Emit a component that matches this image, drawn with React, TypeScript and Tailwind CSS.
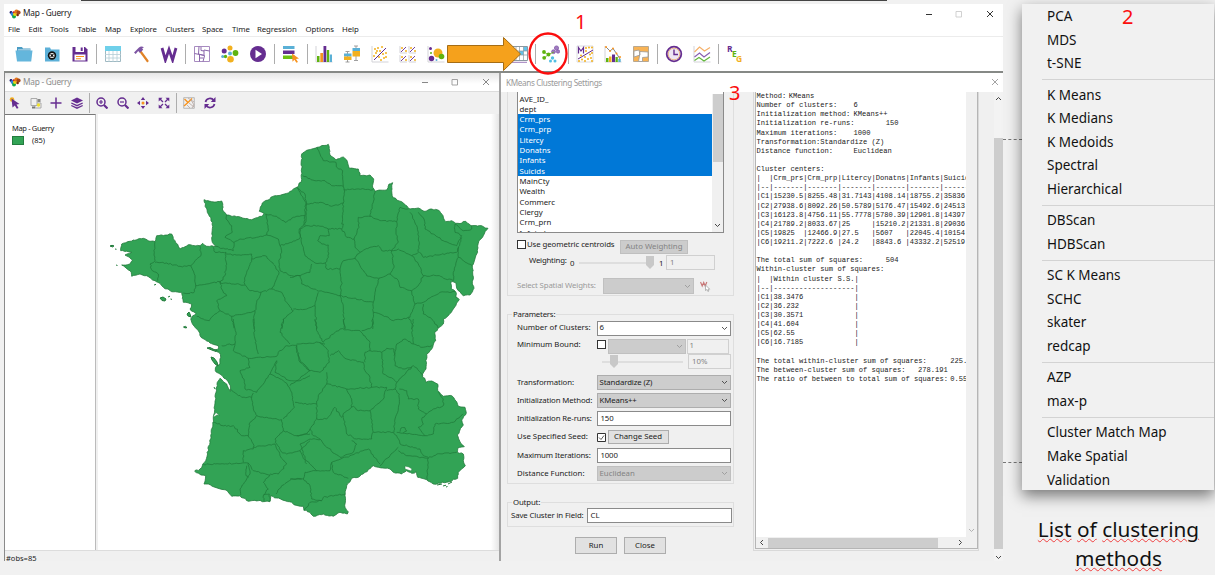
import React from "react";

/* ---------- map geometry ---------- */

type Pt = [number, number];

const parse = (s: string): Pt[] =>
  s.trim().split(/\s+/).map((p) => p.split(",").map(Number) as unknown as Pt);

let seed = 7;
const rnd = () => {
  seed = (seed * 16807) % 2147483647;
  return seed / 2147483647 - 0.5;
};

/** Turns a coarse polyline into a wobbly border. */
const rough = (pts: Pt[], step: number, amp: number): string => {
  let d = `M${pts[0][0].toFixed(1)} ${pts[0][1].toFixed(1)}`;
  for (let i = 1; i < pts.length; i++) {
    const [ax, ay] = pts[i - 1];
    const [bx, by] = pts[i];
    const n = Math.max(1, Math.round(Math.hypot(bx - ax, by - ay) / step));
    for (let k = 1; k <= n; k++) {
      const j = k === n ? 0 : amp;
      const x = ax + ((bx - ax) * k) / n + rnd() * j;
      const y = ay + ((by - ay) * k) / n + rnd() * j;
      d += `L${x.toFixed(1)} ${y.toFixed(1)}`;
    }
  }
  return d;
};

const OUTLINE = `302.7,154 306.7,151.3 317.3,148.3 328.3,145.3 330,156 336,161 343.3,158 346.7,161 349.3,169.3 358.3,170 360,176.7 370,176 373.7,180 372.7,188.3 375,192.3 386.7,191 389,185 392.7,183.7 391.7,191.7 393.3,198.7 401.7,202.7 410,210 418.3,209 424,212.3 431.7,210 439.3,211.7 446,222.7 451.7,221.7 455.7,224.3 461.7,224 465.7,222.3 471,226.7 481.7,226.7 488,229.3 483.3,236.7 478.3,244.3 476.7,255 472.3,266.7 473.3,280 472.3,285 474,289.3 470,296 463.3,296.7 460,292.7 456.7,289.3 456,284 451.3,282.3 451.3,290 455.7,292.7 456,298.3 459.3,300.7 453.3,310 448.3,316.7 443.3,320 443.3,325 435,332.7 435.7,341.7 431.7,350 426.7,355 426,370 422.3,376 426,383.3 431.7,382 437.7,385 437.7,391.7 443.3,397.3 451.7,396.7 456.7,402.7 458.3,407.3 465,408.3 466.3,414 461.7,421 463.3,426 457.3,436 460,442.7 464.3,447.7 457.7,449.3 457.3,453.3 463.3,455 463.3,461.7 465.3,466.7 458.3,473.3 457.7,479.3 446.7,483.3 433.3,485 426.7,480.7 417.7,478.3 416,472.7 411.7,474.3 406.7,471.7 401.7,475 393.3,473.3 390,470 378.3,468.3 373.3,466.7 365,473.3 358.3,478.3 351.7,479.3 346.7,486.7 345,496.7 345,508.3 348.3,512.7 347.3,515 340,513.3 333.3,517.3 323.3,515 313.3,517.3 310,513.3 304,511.3 303.3,507.3 294.3,506 291.7,503.3 285,501.7 276.7,499 270.7,496.7 270,502.7 258.3,501.7 248.3,502.3 240,496.7 231.7,497.3 226,491 215,488.3 208.3,485 204,485 205.7,476.7 201,476 194.7,472.3 200,470 205.7,461.7 210,443.3 213.3,420 216,393.3 217.3,383.3 220,379.3 226.7,385 230.3,392.3 230.3,386.7 226,380 220,375 215.3,371.7 216.7,366.7 220,365 220.7,358.3 219,353.3 215,351 218.3,350 218.3,346.7 210,344 201,338.3 198.3,331.7 191.7,323.3 190.7,320 196,314.3 190,310 191.7,305 183.3,303.3 181.7,293.3 171.7,292.7 163.3,288.3 160,284.3 155,281.7 146.7,276.7 140,275 131.7,277.3 130,271.7 121.7,266 130,265 132.7,261 125,256 131.7,253.3 120.7,251.7 121.7,245 133.3,241 143.3,239.3 150,242.3 155,242.7 156.7,236.7 171.7,235 175,241.7 180,250 188.3,245.7 200,246.7 202.7,244.3 206.7,247.3 216,247.3 212.3,243.3 212.3,223.3 207.3,213.3 204,200.7 211.7,202.7 221.7,202 222.7,206.7 222.3,210 226.7,216 236.7,217.7 251.7,220.7 261.7,217.3 264,214.3 259.3,212.3 262.3,204 275,196.7 288.3,194 297.3,188.3 301.7,180.7 301.7,155 302.7,154`;

const BORDERS: { ox: number; oy: number; lines: string[] }[] = [
  {
    ox: 100,
    oy: 130,
    lines: [
      "165,338 163,370 165,395 150,405 157,425 175,435 173,455",
      "165,400 200,402 240,412 272,410 290,390 303,380 300,350",
      "272,410 285,440 287,470 280,492 250,492",
      "287,470 320,465 360,458",
      "340,355 345,370 378,370 378,410 375,440 360,462 400,465 435,468",
      "348,352 375,360 400,365 402,340 375,325 397,310 395,290 378,270 380,258",
      "378,375 410,378 455,375 455,390 440,430 432,460 450,485 483,490",
      "402,340 420,330 470,325 500,318 505,300 497,255",
      "455,390 495,380 520,405 537,430 525,460 515,480 483,490",
      "500,318 535,330 540,350 545,370 537,400 540,425 575,440 600,440",
      "497,255 530,262 555,280 580,265 615,260",
      "540,350 575,340 600,328 598,300 610,290 615,260 617,220 592,175",
      "360,458 365,480 380,500 350,515 360,545 340,560 328,575 310,570 290,562",
      "360,545 395,562 440,552 465,545 470,520 483,490",
      "395,562 402,598",
      "465,545 462,570 462,600",
      "515,480 545,490 555,515 580,545 550,570 545,600",
    ],
  },
  {
    ox: 290,
    oy: 130,
    lines: [
      "38,140 75,155 105,155 125,170 160,172",
      "82,55 90,75 100,95 138,100 140,115 158,125 160,172 162,182",
      "162,182 200,180 250,182",
      "20,175 45,195 48,215 50,225",
      "50,225 90,220 125,232 160,222 162,182",
      "50,225 48,260 45,290",
      "48,290 85,290 115,300 155,300 160,285 155,285 160,222",
      "48,290 30,300 35,345 45,380 65,395 75,402 105,402 110,420",
      "155,300 170,325 192,330 207,295 205,265 240,262",
      "255,187 250,220 240,262 275,275 320,278 330,235 355,240",
      "320,278 318,310 325,340 305,365",
      "192,330 195,355 210,370 195,385",
      "210,370 240,355 265,350 275,365 305,365",
      "115,300 118,320 90,320 83,335 95,345 115,348 115,385 105,402",
      "65,405 60,430 30,440 0,445",
      "30,440 35,465 70,480 110,490 150,500",
      "110,420 150,420 160,395 195,388",
      "195,385 210,410 230,440 265,448 300,435 312,415 305,365",
      "150,420 155,460 150,500 190,508 235,518 250,520 255,490 268,448",
      "300,435 325,455 330,475 365,485 385,470 400,440 385,405 365,380 385,370 388,340 380,290 360,250",
      "305,365 325,360 365,380",
      "385,250 402,270 405,300 430,315 460,335 500,350 515,320 495,310 495,285",
      "388,370 400,385 440,378 500,370 505,355",
      "515,325 505,360 505,385 547,410",
      "505,385 490,430 490,455",
      "400,440 440,440 490,455",
      "365,485 375,525 400,520 450,490 495,488",
      "375,525 360,565 310,575 270,555 250,550 250,520",
      "400,525 400,555 430,575 445,598",
      "250,550 248,600",
      "150,500 160,530 163,600",
      "85,490 75,530 50,540 10,540",
      "75,530 80,600",
      "355,565 370,590 365,600",
      "495,285 520,305 545,300 543,290",
    ],
  },
  {
    ox: 100,
    oy: 320,
    lines: [
      "400,0 408,40 405,75 365,80",
      "405,75 400,95 445,118 450,145 420,155 432,180 435,210 470,220 490,195 510,165 530,125",
      "460,0 465,60 475,105",
      "445,118 475,115 530,112 535,100 560,80 590,78",
      "550,0 540,40 570,75",
      "590,78 600,130 630,155",
      "530,125 525,160 570,185 600,185 630,170",
      "510,165 550,185 568,205 578,235 583,265 550,300",
      "391,210 425,235 455,235 460,270 470,290",
      "455,235 460,222",
      "470,290 500,295 545,302 550,335 525,360 530,375",
      "340,310 380,322 400,320 425,350 445,350 450,310 470,290",
      "445,350 460,375 460,390 430,395 430,430",
      "460,385 525,375 540,410 560,435 535,465 510,465",
      "310,437 360,435 445,432 460,455 510,468",
      "445,432 450,465 440,480 420,510 422,528",
      "440,440 438,470 447,475",
      "510,468 490,490 505,510 490,530 492,546",
      "550,335 590,350 630,345",
      "530,375 545,400 560,405 600,395 630,365",
      "528,525 545,500 575,480 605,480",
      "490,528 508,525 510,546",
    ],
  },
  {
    ox: 290,
    oy: 320,
    lines: [
      "20,80 20,100 35,130 60,155 90,160 118,130 115,95 90,70",
      "20,75 85,70 105,75",
      "75,0 80,35 100,70",
      "100,70 130,45 150,30 185,35 210,35 240,70 240,95 225,100 225,130",
      "160,0 165,30",
      "248,0 245,25 215,35",
      "120,110 145,95 170,120 220,130 225,155 240,175 245,205 170,210",
      "240,95 275,100 290,88 312,90 315,140 345,150 365,145",
      "275,100 280,165 310,180 320,190",
      "312,110 320,75 345,60 370,75 400,85 425,80",
      "370,0 365,40 370,75",
      "400,170 370,140 320,190 315,210",
      "60,155 20,185 0,200",
      "110,160 110,195 85,230 80,255 40,255 15,250",
      "110,195 170,210 185,240 185,265",
      "245,205 290,205 280,240 240,275",
      "240,275 205,275 190,262 165,280 155,295 135,265 110,300 80,300 80,255",
      "160,290 170,345 200,360 245,360 248,340",
      "240,275 245,310 250,340 310,340 320,350",
      "290,215 315,210 328,225 325,270 315,300 312,340",
      "328,210 350,215 355,240 385,240 385,270 410,285",
      "410,285 430,270 460,260 460,240 445,220",
      "410,285 395,300 400,315 385,325 405,350 320,340",
      "80,300 60,330 70,350 90,360 110,385 150,415 190,400 200,375 185,365",
      "405,350 430,345 435,315 490,310 520,285",
      "320,350 330,375 390,390 400,410 415,415",
      "325,385 300,410 270,440",
      "325,395 350,410 415,418",
      "500,400 440,405 415,418 412,460 412,482",
      "125,430 180,410 235,390 270,435",
      "125,430 130,460 175,478",
      "20,350 50,345 60,330",
      "30,375 45,420 80,455 120,455 125,430",
      "30,375 60,360 90,362",
      "30,395 50,435",
      "80,455 45,460 40,480 0,480",
      "40,480 60,500 65,540 95,545 100,535 165,525",
      "42,574 60,550 95,545",
      "330,338 333,327 345,326 350,336 340,342",
    ],
  },
];

const ISLANDS = [
  "M110 247l2-.7 2 .6-1.500 1zM115 250l1.500.3M116 266l1.500.5M154 286l2-.6M160 299l3-1 3 2-1 2-3-.5zM168 298l2-.8M170.500 300l1.500.4M187 315l2-2 1 2 1 3-3-1zM183.500 328l2-.6 1.500 1.200-2 .3zM207 349l3-.5 4 2 3 .8-1 1.200-4-1.400zM211 358l3 1 3 4 1 4-3-2-3-4zM214 388l1 2",
  "M437 486l5-1M443 487l3-.8M448 485l4-2M446 488l1.500-.5",
];

const OUTLINE_D = rough(parse(OUTLINE), 2.2, 1.3) + "Z";
const BORDER_D = BORDERS.map(({ ox, oy, lines }) =>
  lines
    .map((l) => rough(parse(l).map(([x, y]) => [ox + x / 3, oy + y / 3] as Pt), 2, 1.4))
    .join("")
).join("");

const FranceMap = () => (
  <svg viewBox="98 115 402 435" className="block h-[435px] w-[402px]">
    <path d={OUTLINE_D} fill="#32a355" stroke="#227a3b" strokeWidth=".8" />
    <path d={BORDER_D} fill="none" stroke="#1f7a3a" strokeWidth=".75" />
    <path d={ISLANDS.join("")} fill="#32a355" stroke="#227a3b" strokeWidth="1" />
    <path d="M213.500 417l2.500-3.500 3.500 3-2.500-.5-3 2zM405 467l4 1 3 2-1 2-3-1-3-1z" fill="#fff" stroke="#227a3b" strokeWidth=".5" />
  </svg>
);

/* ---------- icons ---------- */

const P = "#652d90";
const O = "#f7931e";
const Y = "#f2b01e";
const G = "#5fb30f";
const B = "#5ab0d6";

const Logo = () => (
  <svg viewBox="0 0 12 10" className="block h-[10px] w-[12px] shrink-0">
    <circle cx="2" cy="3.400" r="1.400" fill="#1b1b6e" />
    <circle cx="3.600" cy="5" r="2" fill="#2f7fe0" />
    <circle cx="5" cy="7.600" r="2" fill="#12a84c" />
    <circle cx="6" cy="5" r="2" fill="#e8d515" />
    <circle cx="7.500" cy="2.600" r="2.200" fill="#e2761b" />
    <circle cx="9.600" cy="3.500" r="2" fill="#a3471a" />
    <circle cx="8.600" cy="6" r="1.300" fill="#7b2a12" />
    <circle cx="4.700" cy="3.200" r="1" fill="#d3231d" />
  </svg>
);

const Ic = ({ children }: { children?: React.ReactNode }) => (
  <span className="flex w-[28px] shrink-0 justify-center">
    <svg viewBox="0 0 18 18" className="block h-[18px] w-[18px]" fill="none">
      {children}
    </svg>
  </span>
);

const Dots = ({ d, c }: { d: string; c: string }) => (
  <g fill={c}>
    {parse(d).map(([x, y], i) => (
      <circle key={i} cx={x} cy={y} r="1" />
    ))}
  </g>
);

const Axis = () => <path d="M1 1v16h16.500" stroke="#d3d3d8" />;

const Sep = ({ className }: { className: string }) => (
  <span className={`flex shrink-0 justify-center ${className}`}>
    <span className="h-[20px] w-px bg-[#adadad]" />
  </span>
);

const MainToolbar = () => (
  <div className="flex h-[34px] items-center pl-[6px]">
    <Ic>
      <path d="M2 2h5l1 1.500h7.500V7H2z" fill="#4a9cc4" />
      <path d="M.5 5.500h17L16.200 16.500H2z" fill="#64b6dc" />
      <path d="M3 4.800h12.500" stroke="#d7eef8" strokeWidth=".8" />
    </Ic>
    <Ic>
      <path d="M2 2.500h5l1 2h8.500v12H2z" fill="#5cb0d8" />
      <circle cx="9" cy="10.500" r="4.200" fill="#111" />
      <circle cx="9" cy="10.500" r="2.500" fill="#fff" />
      <path d="M7.600 9.100l2.800 2.800M10.400 9.100l-2.800 2.800" stroke="#111" strokeWidth="1.200" />
    </Ic>
    <Ic>
      <path d="M1.500 2h12.500l2.500 2.500v12h-15z" fill={P} />
      <path d="M4.500 2h8.500v5h-8.500z" fill="#fff" />
      <path d="M9.700 2.500h2v3.500h-2z" fill={P} />
      <path d="M3.500 9.500h11v6h-11z" fill="#fff" />
      <path d="M5 11.500h8M5 13.700h5" stroke={O} strokeWidth="1.100" />
    </Ic>
    <Sep className="w-[5px]" />
    <Ic>
      <path d="M1.500 1.500h15v15h-15z" fill="#fff" stroke="#9fb9c2" />
      <path d="M1 1h16v5H1z" fill="#6fd0ea" />
      <path d="M1 9.500h16M1 13h16M5 6v11M9 6v11M13 6v11" stroke="#b5cdd5" strokeWidth=".8" />
    </Ic>
    <Ic>
      <path d="M8.500 6.500l7 9.500" stroke="#e08327" strokeWidth="2.200" strokeLinecap="round" />
      <path d="M2 7.500L7 2.500c1.500-1.300 3.500-1 5-.2l-1.800.9 1 1.500-3.400 3-1.600-1.700-2.500 3z" fill="#7d55a3" />
    </Ic>
    <Ic>
      <path d="M2 3l3.400 12L9 4.500 12.600 15 16 3" stroke={P} strokeWidth="2.800" />
    </Ic>
    <Sep className="w-[5px]" />
    <Ic>
      <path d="M1.500 1.500h15v15h-15z" stroke="#a78bc0" />
      <path d="M6 1.500l-.5 7.500 6 1.500M1.500 8.500l10 2M11 10.500V5l5.500 1M8 2v3.500l3 .5M6.500 9v7.500M11.500 11l-1.500 5.500M6.500 13h4" stroke="#8a66ab" />
    </Ic>
    <Ic>
      <circle cx="9" cy="3" r="2.500" fill={Y} />
      <circle cx="3.200" cy="6" r="2.500" fill={P} />
      <circle cx="9" cy="8.500" r="2" fill={B} />
      <circle cx="14.500" cy="8" r="2.900" fill={G} />
      <circle cx="1.700" cy="11.500" r="1.500" fill={B} />
      <circle cx="4.500" cy="11.500" r="1.700" fill={G} />
      <circle cx="9.500" cy="14.300" r="3.300" fill={Y} />
    </Ic>
    <Ic>
      <circle cx="9" cy="9" r="8" fill={P} />
      <path d="M6.500 4.800l6.500 4.200-6.500 4.200z" fill="#fff" />
    </Ic>
    <Sep className="w-[4px]" />
    <Ic>
      <path d="M2 1h11.500v3H2z" fill={B} />
      <path d="M2 5.500h11.500v3.500H2z" fill={P} />
      <path d="M2 10.500h11.500v3.500H2z" fill="#6fc011" />
      <path d="M11 8.500l7 5-3 .4 2 3-1.600.8-2-3-1.900 2z" fill={O} />
    </Ic>
    <Sep className="w-[6px]" />
    <Ic>
      <Axis />
      <path d="M2 11h2.500v6H2z" fill={G} />
      <path d="M5.300 8h2.700v9H5.300z" fill={O} />
      <path d="M8.500 1h2.800v16H8.500z" fill={P} />
      <path d="M11.800 5h2.400v12h-2.400z" fill={G} />
      <path d="M14.700 9.500h2.300v7.500h-2.300z" fill={B} />
    </Ic>
    <Ic>
      <path d="M4.500 7v10M2.500 6.500h4M2.500 17h4M13 1v14M11 1h4M11 15.500h4" stroke="#888" strokeWidth=".8" />
      <path d="M1 8.500h7.500v3H1zM9.500 3h7.500v3H9.500z" fill={B} />
      <path d="M1 11.500h7.500v3.500H1zM9.500 6h7.500v5.500H9.500z" fill={Y} />
    </Ic>
    <Ic>
      <Axis />
      <path d="M3 15L15 3" stroke={P} />
      <Dots c={Y} d="4,4 7,3 9,6 5,8 3,11 8,12 12,9 15,8 13,13 10,15 15,12 11,2 6,6" />
    </Ic>
    <Ic>
      <path d="M1 1v7h7M10 1v7h7M1 10v7h7M10 10v7h7" stroke="#d3d3d8" />
      <path d="M2 7l5-5M11 7l5-5M2 16l5-5M11 16l5-5" stroke={P} strokeWidth=".9" />
      <Dots c={Y} d="3,3 7,6 12,3 16,6 3,12 7,15 12,12 16,15" />
    </Ic>
    <Ic>
      <Axis />
      <circle cx="3.500" cy="3.500" r="1.500" fill={P} />
      <circle cx="4" cy="8" r="1" fill={G} />
      <circle cx="4.500" cy="13.500" r="2.700" fill={P} />
      <circle cx="11" cy="8" r="4.500" fill={Y} />
      <circle cx="14.500" cy="11.500" r="2.800" fill={G} />
      <circle cx="9.500" cy="15" r="1" fill={B} />
    </Ic>
    <Ic>
      <path d="M1 17h16.500" stroke="#d3d3d8" />
    </Ic>
    <Ic>
      <path d="M1 17l4-.6 4 .6 4-.8" stroke="#8ac25a" />
    </Ic>
    <Ic>
      <path d="M1.500 1.500h15v14h-15z" fill="#fff" stroke="#8b98a0" />
      <path d="M12.500 2H16v4h-3.500zM8 6h4.500v4H8z" fill="#64c1e8" />
      <path d="M5 1.500v14M8.500 1.500v14M12.500 1.500v14M1.500 6h15M1.500 10h15" stroke="#8b98a0" strokeWidth=".7" />
      <path d="M1 17.300h15" stroke="#9c7bbb" />
    </Ic>
    <Sep className="w-[3px]" />
    <Ic>
      <g fill="#a07cc0" stroke="#7a4ea5" strokeWidth=".7">
        <circle cx="14.500" cy="3" r="2.100" />
        <circle cx="11.500" cy="6.700" r="1.900" />
        <circle cx="16" cy="6.500" r="1.700" />
      </g>
      <path d="M2 7l4 2.500-3.500 3.500M6.500 9.500L12 7" stroke={G} strokeWidth=".8" />
      <circle cx="2" cy="7" r="1.900" fill={G} />
      <circle cx="6.500" cy="9.500" r="1.900" fill={G} />
      <circle cx="2.200" cy="12.800" r="1.900" fill={G} />
      <circle cx="10.500" cy="13" r="1.700" fill="#51bfe3" />
      <circle cx="8.500" cy="16" r="1.500" fill="#51bfe3" />
      <circle cx="13" cy="16" r="1.500" fill="#51bfe3" />
    </Ic>
    <Sep className="w-[6px]" />
    <Ic>
      <path d="M1 1h16v16H1z" stroke="#d3d3d8" strokeWidth=".8" />
      <path d="M2.500 8.500V2.500L5 6l2.500-3.500v6" stroke={P} strokeWidth="1.200" />
      <path d="M2 14L17 5" stroke={P} />
      <Dots c={Y} d="10,3 13,2.500 16,2.500 10,6 14,9.500 16,8 3,16 6,14.500 9,16 9,12 12,14 15,13 16,16 5,10.500" />
    </Ic>
    <Ic>
      <Axis />
      <path d="M2 2l4 4 3-2.500 3.500 5L16 14" stroke="#666" strokeWidth=".8" />
      <Dots c={O} d="2,2 6,6 9,3.500 12.500,8.500 16,12" />
      <path d="M2 13h2.500v4H2z" fill={G} />
      <path d="M5 11.500h2.500V17H5z" fill={Y} />
      <path d="M8 9.500h3V17H8z" fill={P} />
      <path d="M11.500 12h2.300v5h-2.300z" fill={G} />
      <path d="M14.300 14h2.400v3h-2.400z" fill={B} />
    </Ic>
    <Ic>
      <path d="M1.500 1.500h15v15h-15z" fill="#f8b355" stroke="#b8a890" />
      <path d="M2 6l5-1 1 5-6 2zM8 6.500l8 .5v5l-5.500.5v4H6.500L7.500 11z" fill="#fff" stroke="#999" strokeWidth=".8" />
    </Ic>
    <Sep className="w-[5px]" />
    <Ic>
      <circle cx="9" cy="9" r="7.300" fill="#eee6f5" stroke={P} strokeWidth="1.800" />
      <circle cx="9" cy="9" r="5.800" stroke="#e8a55c" strokeWidth=".7" />
      <path d="M9 4.500V9.500h4" stroke={P} strokeWidth="1.400" />
    </Ic>
    <Ic>
      <Axis />
      <path d="M1.500 7l5-5 5 4 5.500-3.500" stroke="#f5b069" strokeWidth="1.200" />
      <path d="M1.500 12l5-4 4.500 4 6-4.500" stroke="#8a5fb0" strokeWidth="1.200" />
      <path d="M1.500 15.500l4.500-3 5 3.500 6-4" stroke="#63b73c" strokeWidth="1.200" />
    </Ic>
    <Sep className="w-[5px]" />
    <span className="flex w-[28px] justify-center">
      <span className="relative block h-[18px] w-[18px] font-['Open_Sans',sans-serif] text-[8.500px] leading-[8px] font-bold">
        <span className="absolute top-0 left-[1px] text-[#652d90]">R</span>
        <span className="absolute top-[5px] left-[6px] text-[#5fb30f]">E</span>
        <span className="absolute top-[10px] left-[10px] text-[#f2b01e]">G</span>
      </span>
    </span>
  </div>
);

const SIc = ({ children }: { children?: React.ReactNode }) => (
  <span className="flex w-[20.600px] shrink-0 justify-center">
    <svg viewBox="0 0 12 12" className="block h-[12px] w-[12px]" fill="none" stroke={P}>
      {children}
    </svg>
  </span>
);

const MapToolbar = () => (
  <div className="flex h-[22px] items-center bg-[#f0f0f0]">
    <SIc>
      <circle cx="3" cy="2.500" r="2.300" fill={Y} stroke="none" />
      <path d="M2.500 1.500l8 5.500-3 .5 2 3.500-1.700.8-2-3.300-2.300 2z" fill={P} stroke="none" />
    </SIc>
    <SIc>
      <path d="M1 1.500h6v7H1zM7 6h4v5H5V8.500" stroke="#aaa" />
      <path d="M7.500 2h3v3h-3z" fill="#888" stroke="none" />
      <circle cx="8.500" cy="8" r="1.700" fill="#f1e22a" stroke="none" />
      <path d="M2 9.500h3v2H2z" fill="#777" stroke="none" />
    </SIc>
    <SIc>
      <path d="M6 .5v11M.5 6h11" strokeWidth="1.500" />
    </SIc>
    <SIc>
      <path d="M6 .5l6 3-6 3-6-3z" fill={P} stroke="none" />
      <path d="M.3 6L6 8.700 11.700 6M.3 8.500L6 11.200l5.700-2.700" strokeWidth="1.300" />
    </SIc>
    <Sep className="w-[4.500px]" />
    <SIc>
      <circle cx="5" cy="5" r="4" strokeWidth="1.500" />
      <path d="M8 8l3.500 3.500" strokeWidth="2.200" />
      <path d="M3 5h4M5 3v4" strokeWidth="1.200" />
    </SIc>
    <SIc>
      <circle cx="5" cy="5" r="4" strokeWidth="1.500" />
      <path d="M8 8l3.500 3.500" strokeWidth="2.200" />
      <path d="M3 5h4" strokeWidth="1.200" />
    </SIc>
    <SIc>
      <path d="M6 0l2.200 3H3.800zM6 12l2.200-3H3.800zM0 6l3-2.200v4.400zM12 6L9 3.800v4.400z" fill={P} stroke="none" />
      <circle cx="6" cy="6" r="1.500" fill={O} stroke="none" />
    </SIc>
    <SIc>
      <path d="M1.500 1.500L5 5M10.500 1.500L7 5M1.500 10.500L5 7M10.500 10.500L7 7" strokeWidth="1.300" />
      <path d="M.7.700h3.800L.7 4.500zM11.300.700H7.500l3.800 3.800zM.7 11.300h3.800L.7 7.500zM11.300 11.300H7.500l3.800-3.800z" fill={P} stroke="none" />
    </SIc>
    <Sep className="w-[4.500px]" />
    <SIc>
      <path d="M.7.700h10.600v10.600H.7z" stroke="#aaa" strokeWidth=".8" />
      <path d="M1 9l4-3.500L1.500 2M5 5.500L9 1.500" stroke={O} strokeWidth="1.400" />
      <path d="M5 1l6 4M4 8l3 3M6 6l5 4M8 3l3 5M9 11l2-3" stroke="#b5a5a0" strokeWidth=".8" />
    </SIc>
    <SIc>
      <path d="M1.500 5A4.600 4.600 0 0 1 9.800 3.500M10.500 7A4.600 4.600 0 0 1 2.200 8.500" strokeWidth="1.700" />
      <path d="M11.500 0v5H6.800zM.5 12V7h4.700z" fill={P} stroke="none" />
    </SIc>
  </div>
);

/* ---------- small parts ---------- */

const Chevron = ({ dir, className }: { dir: "up" | "down" | "left" | "right"; className: string }) => {
  const d = { up: "M1 5l2.500-2.500 2.500 2.500", down: "M1 2l2.500 2.500 2.500-2.500", left: "M5 1l-2.500 2.500 2.500 2.500", right: "M2 1l2.500 2.500-2.500 2.500" };
  return (
    <svg viewBox="0 0 7 7" className={`block h-[7px] w-[7px] shrink-0 ${className}`} fill="none" stroke="currentColor" strokeWidth=".9">
      <path d={d[dir]} />
    </svg>
  );
};

const WindowButtons = ({ className, dim }: { className: string; dim?: boolean }) => (
  <svg viewBox="0 0 70 10" className={`block h-[10px] w-[70px] ${className}`} fill="none" stroke="currentColor">
    <path d="M1 5.500h6" />
    <path d="M31 2.500h5.500v5.500H31z" stroke={dim ? "#999" : "#ccc"} strokeWidth=".9" />
    <path d="M62 2l6 6M68 2l-6 6" />
  </svg>
);

const Combo = ({ text, className, disabled }: { text?: string; className: string; disabled?: boolean }) => (
  <div className={`flex shrink-0 items-center justify-between border pr-[2px] pl-[2px] ${className}`}>
    <span>{text}</span>
    <Chevron dir="down" className={disabled ? "text-[#9a9a9a]" : "text-[#444]"} />
  </div>
);

const Field = ({ text, className }: { text: string; className: string }) => (
  <div className={`flex shrink-0 items-center border ${className}`}>{text}</div>
);

const Slider = ({ className, thumb }: { className: string; thumb: string }) => (
  <div className={`flex h-[14px] shrink-0 items-center ${className}`}>
    <div className="relative h-[2px] w-full bg-[#dedede]">
      <svg viewBox="0 0 8 13" className={`absolute -top-[6px] h-[13px] w-[8px] ${thumb}`}>
        <path d="M0 0h8v9l-4 4-4-4z" fill="#c8c8c8" />
      </svg>
    </div>
  </div>
);

const Row = ({ label, className, children }: { label: string; className: string; children?: React.ReactNode }) => (
  <div className={`flex items-center pl-[9px] ${className}`}>
    <span className="w-[79.500px] shrink-0">{label}</span>
    {children}
  </div>
);

const LIST_TOP = ["AVE_ID_", "dept"];
const LIST_SEL = ["Crm_prs", "Crm_prp", "Litercy", "Donatns", "Infants", "Suicids"];
const LIST_END = ["MainCty", "Wealth", "Commerc", "Clergy", "Crm_prn", "Infntcd"];

const REPORT = [
  "Method:\tKMeans",
  "Number of clusters:\t6",
  "Initialization method:\tKMeans++",
  "Initialization re-runs:\t150",
  "Maximum iterations:\t1000",
  "Transformation:Standardize (Z)",
  "Distance function:\tEuclidean",
  "",
  "Cluster centers:",
  "|  |Crm_prs|Crm_prp|Litercy|Donatns|Infants|Suicids|",
  "|--|-------|-------|-------|-------|-------|-------|",
  "|C1|15230.5|8255.48|31.7143|4108.14|18755.2|35836",
  "|C2|27938.6|8092.26|50.5789|5176.47|15492.6|24513",
  "|C3|16123.8|4756.11|55.7778|5780.39|12901.8|14397",
  "|C4|21789.2|8033.67|25     |15210.2|21331.8|29036",
  "|C5|19825  |12466.9|27.5   |5607   |22045.4|10154",
  "|C6|19211.2|7222.6 |24.2   |8843.6 |43332.2|52519",
  "",
  "The total sum of squares:\t504",
  "Within-cluster sum of squares:",
  "|  |Within cluster S.S.|",
  "|--|-------------------|",
  "|C1|38.3476            |",
  "|C2|36.232             |",
  "|C3|30.3571            |",
  "|C4|41.604             |",
  "|C5|62.55              |",
  "|C6|16.7185            |",
  "",
  "The total within-cluster sum of squares:\t225.",
  "The between-cluster sum of squares:\t278.191",
  "The ratio of between to total sum of squares:\t0.55",
].join("\n");

const MENU = [
  ["PCA", "MDS", "t-SNE"],
  ["K Means", "K Medians", "K Medoids", "Spectral", "Hierarchical"],
  ["DBScan", "HDBScan"],
  ["SC K Means", "SCHC", "skater", "redcap"],
  ["AZP", "max-p"],
  ["Cluster Match Map", "Make Spatial", "Validation"],
];

/* ---------- windows ---------- */

const MapWindow = () => (
  <div className="flex h-[488px] w-[497px] shrink-0 flex-col border-r-2 border-l border-r-[#a3a3a3] border-l-[#8a8a8a] bg-[#f0f0f0]">
    <div className="flex h-[19px] items-center border-b border-[#dcdcdc] bg-gradient-to-b from-[#e6e6e6] to-white to-60% pl-[4px] text-[8.300px] tracking-[-0.250px] text-[#8c8c8c]">
      <Logo />
      <span className="ml-[2px] w-[200px]">Map - Guerry</span>
      <WindowButtons dim className="mr-[8px] ml-auto text-[#888]" />
    </div>
    <MapToolbar />
    <div className="flex h-[436px] shrink-0">
      <div className="w-[91px] shrink-0 border-t border-r border-t-[#777] border-r-[#bbb] bg-white pt-[8px] pl-[7px] text-[7.500px] text-[#222]">
        <div className="h-[11px] leading-[11px] tracking-[-0.350px]">Map - Guerry</div>
        <div className="flex h-[13px] items-center">
          <span className="h-[9px] w-[12px] border border-[#237c3e] bg-[#32a355]" />
          <span className="ml-[8px]">(85)</span>
        </div>
      </div>
      <div className="w-[2px] shrink-0 bg-[#f0f0f0]" />
      <div className="w-[401px] shrink-0 overflow-hidden bg-white bg-gradient-to-l from-[#e6e6e6] to-transparent to-2%">
        <FranceMap />
      </div>
    </div>
    <div className="flex h-[11px] items-center justify-between border-t border-[#dcdcdc] pl-px text-[7.500px] text-[#222]">
      <span className="mt-[6px]">#obs=85</span>
    </div>
  </div>
);

const listRow = "block h-[10.330px] pl-[1.500px] leading-[10.330px]";

const SettingsForm = () => (
  <div className="w-[252px] shrink-0 pl-[6px]">
    <div className="h-[204px] w-[227px] border border-t-0 border-[#dedede] pl-[9px]">
      <div className="flex h-[141px] w-[207px] overflow-hidden border border-t-0 border-[#8a8a8a] bg-white pt-[1.500px]">
        <div className="w-[194px] shrink-0 overflow-hidden">
          {LIST_TOP.map((t) => (
            <span key={t} className={listRow}>{t}</span>
          ))}
          <div className="bg-[#0078d7] text-white">
            {LIST_SEL.map((t) => (
              <span key={t} className={listRow}>{t}</span>
            ))}
          </div>
          {LIST_END.map((t) => (
            <span key={t} className={listRow}>{t}</span>
          ))}
        </div>
        <div className="flex w-[11px] flex-col items-center justify-between bg-[#f0f0f0]">
          <div className="h-[68px] w-[10px] bg-[#cdcdcd]" />
          <Chevron dir="down" className="mb-[3px] text-[#333]" />
        </div>
      </div>
      <div className="flex h-[22px] items-center pt-[5px]">
        <span className="mb-[4px] h-[9px] w-[9px] shrink-0 border border-[#333] bg-white" />
        <span className="mb-[4px] ml-[1px] w-[93px] tracking-[-0.080px] whitespace-nowrap">Use geometric centroids</span>
        <span className="flex h-[14px] w-[68px] items-center justify-center border border-[#bfbfbf] bg-[#cccccc] text-[#838383]">Auto Weighting</span>
      </div>
      <div className="flex h-[15px] items-center pl-[12px]">
        <span className="mb-[4px] w-[41px] tracking-[-0.200px]">Weighting:</span>
        <span className="mt-[2px] w-[9px]">0</span>
        <Slider className="w-[75px]" thumb="right-0" />
        <span className="mt-[2px] ml-[5px] w-[7px]">1</span>
        <Field text="1" className="h-[15px] w-[49px] border-[#d0d0d0] bg-[#f0f0f0] pl-[3px] text-[#838383]" />
      </div>
      <div className="mt-[8px] flex h-[16px] items-center text-[#9a9a9a]">
        <span className="w-[85.500px] shrink-0 tracking-[-0.150px] whitespace-nowrap">Select Spatial Weights:</span>
        <Combo disabled className="h-[16px] w-[91px] border-[#c0c0c0] bg-[#cccccc]" />
        <svg viewBox="0 0 11 11" className="ml-[6px] block h-[11px] w-[11px]" fill="none">
          <path d="M.5 1l1.700 4 1.500-3.500 1.500 3.500 1.600-4" stroke="#c97a7a" strokeWidth="1.200" />
          <path d="M5.500 4v5.500l1.400-1 1 2 1-.5-.9-1.800h1.700z" fill="#fff" stroke="#999" strokeWidth=".7" />
        </svg>
      </div>
    </div>

    <div className="relative mt-[18px] h-[170px] w-[227px] border border-[#dedede] pt-[5px]">
      <span className="absolute -top-[7px] left-[4px] bg-[#f0f0f0] px-px leading-[12px] tracking-[-0.200px]">Parameters:</span>
      <Row label="Number of Clusters:" className="h-[16px]">
        <Combo text="6" className="h-[15px] w-[134px] border-[#8a8a8a] bg-white" />
      </Row>
      <Row label="Minimum Bound:" className="mt-[1px] h-[16px]">
        <span className="mb-[2px] h-[9px] w-[9px] shrink-0 border border-[#333] bg-white" />
        <Combo disabled className="mt-[2px] ml-[2px] h-[15px] w-[78px] border-[#c0c0c0] bg-[#cccccc]" />
        <Field text="1" className="mt-[2px] ml-px h-[15px] w-[42px] border-[#d0d0d0] bg-[#f0f0f0] pl-[2px] text-[#838383]" />
      </Row>
      <div className="flex h-[17px] items-center pl-[94px]">
        <Slider className="w-[81px]" thumb="left-[8px]" />
        <Field text="10%" className="ml-[5px] h-[15px] w-[43px] border-[#d0d0d0] bg-[#f0f0f0] pl-[3px] text-[#838383]" />
      </div>
      <Row label="Transformation:" className="mt-[3.500px] h-[18.200px] tracking-[-0.120px]">
        <Combo text="Standardize (Z)" className="h-[15px] w-[134px] border-[#adadad] bg-[#cdcdcd]" />
      </Row>
      <Row label="Initialization Method:" className="h-[18.200px] tracking-[-0.120px] whitespace-nowrap">
        <Combo text="KMeans++" className="h-[15px] w-[134px] border-[#adadad] bg-[#cdcdcd]" />
      </Row>
      <Row label="Initialization Re-runs:" className="h-[18.200px] tracking-[-0.120px] whitespace-nowrap">
        <Field text="150" className="h-[15px] w-[134px] border-[#8a8a8a] bg-white pl-[3px]" />
      </Row>
      <Row label="Use Specified Seed:" className="h-[18.200px]">
        <svg viewBox="0 0 9 9" className="block h-[9px] w-[9px]" fill="#fff" stroke="#333">
          <path d="M.5.500h8v8h-8z" />
          <path d="M2 4.500l2 2 3-4" fill="none" strokeWidth=".8" />
        </svg>
        <span className="ml-[2px] flex h-[14px] w-[61px] items-center justify-center border border-[#adadad] bg-[#e1e1e1]">Change Seed</span>
      </Row>
      <Row label="Maximum Iterations:" className="h-[18.200px] tracking-[-0.150px]">
        <Field text="1000" className="h-[15px] w-[134px] border-[#8a8a8a] bg-white pl-[3px]" />
      </Row>
      <Row label="Distance Function:" className="h-[18.200px]">
        <Combo disabled text="Euclidean" className="h-[15px] w-[134px] border-[#bfbfbf] bg-[#cccccc] text-[#838383]" />
      </Row>
    </div>

    <div className="relative mt-[18px] flex h-[25px] w-[227px] items-center border border-[#dedede] pt-[2px] pl-[3px]">
      <span className="absolute -top-[7px] left-[4px] bg-[#f0f0f0] px-px leading-[12px] tracking-[-0.150px]">Output:</span>
      <span className="w-[75.500px] shrink-0 tracking-[-0.120px] whitespace-nowrap">Save Cluster in Field:</span>
      <Field text="CL" className="h-[15px] w-[145px] border-[#8a8a8a] bg-white pl-[3px]" />
    </div>

    <div className="mt-[10px] flex gap-[7px] pl-[68px]">
      <span className="flex h-[17px] w-[42px] items-center justify-center border border-[#adadad] bg-[#e1e1e1]">Run</span>
      <span className="flex h-[17px] w-[42px] items-center justify-center border border-[#adadad] bg-[#e1e1e1]">Close</span>
    </div>
  </div>
);

const ReportPane = () => (
  <div className="h-[459px] w-[226px] shrink-0 border border-t-0 border-[#d9d9d9] pl-px">
    <div className="flex h-[457px] w-[223px] flex-col border border-t-0 border-[#b5b5b5]">
      <div className="flex h-[445px]">
        <pre className="w-[210px] overflow-hidden bg-white pl-[0.500px] font-['Liberation_Mono',monospace] text-[7.100px] leading-[9.130px] text-[#222] [tab-size:32.300px]">
          {REPORT}
        </pre>
        <div className="flex w-[11px] flex-col items-center justify-end bg-[#f0f0f0] pb-[3px]">
          <Chevron dir="down" className="text-[#aaa]" />
        </div>
      </div>
      <div className="flex h-[11px] items-center bg-[#f0f0f0]">
        <Chevron dir="left" className="ml-[2px] text-[#333]" />
        <div className="ml-[3px] h-[10px] w-[170px] bg-[#cdcdcd]" />
        <Chevron dir="right" className="ml-[19px] text-[#333]" />
      </div>
    </div>
  </div>
);

const KMeansDialog = () => (
  <div className="flex h-[488px] w-[502px] shrink-0 flex-col bg-[#f0f0f0]">
    <div className="flex h-[19px] shrink-0 items-center justify-between bg-white pr-[4px] pl-[5px] text-[8.200px] tracking-[-0.370px] text-[#9a9a9a]">
      <span className="mt-px">KMeans Clustering Settings</span>
      <svg viewBox="0 0 8 8" className="mb-px block h-[8px] w-[8px]" stroke="#999" strokeWidth=".9">
        <path d="M1 1l6 6M7 1L1 7" />
      </svg>
    </div>
    <div className="flex text-[7.800px] text-[#222]">
      <SettingsForm />
      <ReportPane />
      <div className="ml-[15px] flex h-[469px] w-[9px] flex-col items-center bg-[#f3f3f3]">
        <Chevron dir="up" className="mt-[3px] text-[#333]" />
        <div className="mt-[36px] h-[411px] w-[9px] bg-[#cdcdcd]" />
        <Chevron dir="down" className="mt-[5px] text-[#333]" />
      </div>
    </div>
  </div>
);

const MainWindow = () => (
  <div className="flex h-[557px] w-[999px] flex-col bg-white">
    <div className="flex h-[19px] items-center pl-[5px] text-[8.300px] tracking-[-0.250px] text-[#222]">
      <Logo />
      <span className="ml-[2px]">Map - Guerry</span>
      <WindowButtons className="mr-[8px] ml-auto text-[#333]" />
    </div>
    <div className="flex h-[14px] items-center border-b border-[#ececec] pt-px pl-[4px] text-[7.800px] tracking-[-0.080px] text-[#222]">
      <span className="w-[20.500px]">File</span>
      <span className="w-[21.500px]">Edit</span>
      <span className="w-[27.500px]">Tools</span>
      <span className="w-[27.500px]">Table</span>
      <span className="w-[25px]">Map</span>
      <span className="w-[35.500px]">Explore</span>
      <span className="w-[36.500px]">Clusters</span>
      <span className="w-[30px]">Space</span>
      <span className="w-[25px]">Time</span>
      <span className="w-[48.500px]">Regression</span>
      <span className="w-[36.500px]">Options</span>
      <span>Help</span>
    </div>
    <MainToolbar />
    <div className="h-[2px] shrink-0 bg-[#868986]" />
    <div className="flex">
      <MapWindow />
      <KMeansDialog />
    </div>
  </div>
);

const wavy = "underline decoration-[#f04040] decoration-wavy decoration-[0.7px] underline-offset-[1px]";

export default function App() {
  return (
    <div className="relative h-[575px] w-[1215px] overflow-hidden bg-[#f1f1f1] font-['Noto_Sans',sans-serif]">
      <div className="flex">
        <div className="w-[1003px] shrink-0 pl-[4px]">
          <div className="ml-[77px] h-px w-[806px] bg-[#444]" />
          <div className="pt-[3px]">
            <MainWindow />
          </div>
        </div>
        <div className="w-[19px] shrink-0">
          <div className="mt-[139px] border-t border-dashed border-[#777]" />
          <div className="mt-[322px] border-t border-dashed border-[#777]" />
        </div>
        <div className="w-[193px] shrink-0 pt-[4px]">
          <div className="h-[486px] w-[192px] bg-[#f1f1f1] pt-[1px] text-[13.500px] text-[#111] shadow-[0_6px_14px_0px_rgba(0,0,0,0.5)]">
            {MENU.map((group, i) => (
              <div key={i}>
                {i > 0 && <div className="mt-[3px] mb-[3.600px] ml-[20px] h-px bg-[#d3d3d3]" />}
                {group.map((t) => (
                  <div key={t} className="h-[23.650px] pl-[25px] leading-[23.900px] whitespace-nowrap">{t}</div>
                ))}
              </div>
            ))}
          </div>
          <div className="mt-[25px] text-center text-[20.800px] leading-[29px] whitespace-nowrap text-[#111]">
            <span className={wavy}>List</span> <span className={wavy}>of</span> <span className={wavy}>clustering</span>
            <br />
            <span className={wavy}>methods</span>
          </div>
        </div>
      </div>
      <svg viewBox="0 0 76 36" className="absolute top-[36px] left-[446px] h-[36px] w-[76px]">
        <path d="M1.500 9.500h56V1.500l17 16.500-17 16.500v-8h-56z" fill="#f5a11c" stroke="#a56d15" />
      </svg>
      <svg viewBox="0 0 44 46" className="absolute top-[31px] left-[526px] h-[46px] w-[44px]" fill="none">
        <ellipse cx="22" cy="22.500" rx="18.500" ry="20" stroke="#fb0d0d" strokeWidth="2.300" />
      </svg>
      <span className="absolute top-[9px] left-[575px] text-[20px] leading-[26px] text-[#fb0d0d]">1</span>
      <span className="absolute top-[4px] left-[1122px] text-[20px] leading-[26px] text-[#fb0d0d]">2</span>
      <span className="absolute top-[80px] left-[729px] text-[20px] leading-[26px] text-[#fb0d0d]">3</span>
    </div>
  );
}
